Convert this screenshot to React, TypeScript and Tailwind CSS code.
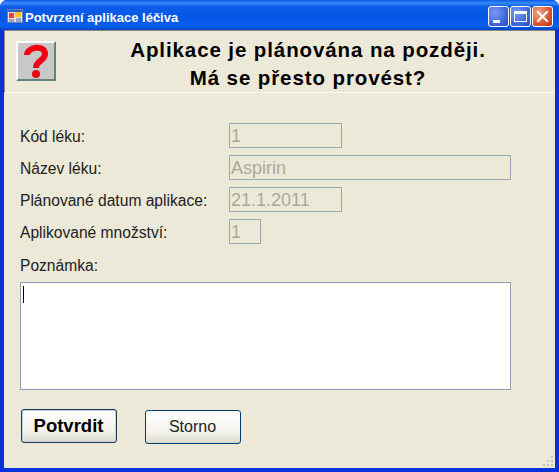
const font = { fontFamily: '"Liberation Sans", Arial, sans-serif' };

function Row({ label, value, inputW }: { label: string; value: string; inputW: string }) {
  return (
    <div className="flex h-[25px] items-center">
      <div className="w-[209px] shrink-0 pt-[2px] text-[15.6px] leading-none text-[#222]">{label}</div>
      <div className={`flex h-[25px] ${inputW} items-center border border-[#9aa7b5] bg-[#ece9d8] px-[1px] pt-[1px] text-[18px] text-[#aca899]`}>{value}</div>
    </div>
  );
}

function CaptionButton({ children, red = false }: { children: React.ReactNode; red?: boolean }) {
  return (
    <div
      className={`flex h-[21px] w-[21px] items-center justify-center rounded-[3px] border border-white ${
        red ? "bg-[radial-gradient(circle_at_30%_30%,#f0a58a,#d9562f_60%,#b8321a)]" : "bg-[radial-gradient(circle_at_30%_30%,#7c9cf0,#3f68dc_60%,#2a4cc4)]"
      }`}
    >
      {children}
    </div>
  );
}

export default function App() {
  return (
    <div style={font} className="flex h-[472px] w-[559px] flex-col overflow-hidden rounded-t-[7px] bg-[#0831d9]">
      <div className="flex h-[30px] shrink-0 items-center bg-[linear-gradient(180deg,#0a58e8_0%,#3a8cf8_10%,#0a5ce8_22%,#0355e6_60%,#0a60ee_88%,#0344c8_100%)] pl-[7px] pr-[6px] pt-[2px]">
        <svg width="16" height="16" viewBox="0 0 16 16" className="shrink-0">
          <rect x="0.5" y="1.5" width="15" height="13" fill="#e8e4d0" stroke="#6a7fb0" />
          <rect x="1" y="2" width="14" height="2" fill="#2a5fd8" />
          <rect x="2" y="5" width="5" height="5" fill="#e8402a" />
          <rect x="8" y="4" width="6" height="5" fill="#f4c020" />
          <rect x="2" y="11" width="5" height="3" fill="#90a8d0" />
          <rect x="9" y="10" width="5" height="4" fill="#90a8d0" />
        </svg>
        <div className="ml-[2px] flex-1 pt-[3px] text-[13px] font-bold text-white">Potvrzení aplikace léčiva</div>
        <div className="flex gap-[1px]">
          <CaptionButton>
            <div className="mt-[10px] mr-[5px] h-[3px] w-[7px] bg-white" />
          </CaptionButton>
          <CaptionButton>
            <div className="h-[11px] w-[13px] border border-t-[3px] border-white" />
          </CaptionButton>
          <CaptionButton red>
            <svg width="13" height="13" viewBox="0 0 13 13">
              <path d="M2 2 L11 11 M11 2 L2 11" stroke="#fff" strokeWidth="2" strokeLinecap="square" />
            </svg>
          </CaptionButton>
        </div>
      </div>

      <div className="ml-[4px] mr-[4px] mb-[4px] flex min-h-0 flex-1 flex-col bg-[#ece9d8]">
        <div className="flex h-[63px] shrink-0 border-b border-t border-l border-b-white border-t-[#8a887c] border-l-[#8a887c]">
          <div className="ml-[11px] mt-[10px] flex h-[40px] w-[40px] items-center justify-center border-2 border-t-white border-l-white border-r-[#5f8480] border-b-[#5f8480] bg-[#c8c8c8]">
            <svg width="28" height="36" viewBox="0 0 28 36">
              <path d="M5 12 C5 4 23 1 23 11 C23 18 14 17 14 25" fill="none" stroke="#f00010" strokeWidth="6" />
              <circle cx="14" cy="31" r="4" fill="#f00010" />
            </svg>
          </div>
          <div className="flex-1 pl-[5px] pt-[5px] text-center text-[20.5px] font-bold leading-[28px] tracking-[0.9px] text-black">
            <div>Aplikace je plánována na později.</div>
            <div>Má se přesto provést?</div>
          </div>
        </div>

        <div className="flex flex-col gap-[7px] pl-[16px] pt-[30px]">
          <Row label="Kód léku:" value="1" inputW="w-[113px]" />
          <Row label="Název léku:" value="Aspirin" inputW="w-[282px]" />
          <Row label="Plánované datum aplikace:" value="21.1.2011" inputW="w-[113px]" />
          <Row label="Aplikované množství:" value="1" inputW="w-[32px]" />
        </div>

        <div className="ml-[16px] mt-[13px] text-[15.6px] leading-[18px] text-[#222]">Poznámka:</div>
        <div className="ml-[16px] mt-[7px] h-[108px] w-[491px] border border-[#8f9db0] bg-white pl-[2px] pt-[3px]">
          <div className="h-[17px] w-px bg-black" />
        </div>

        <div className="ml-[17px] mt-[19px] flex items-start gap-[28px]">
          <div className="flex h-[34px] w-[96px] items-center justify-center rounded-[3px] border border-[#1c3a56] bg-[linear-gradient(180deg,#ffffff,#f2f1ea_70%,#dcd8ca)] pr-[1px] text-[18.5px] font-bold text-black shadow-[inset_0_0_0_1px_#c4d2e8]">
            Potvrdit
          </div>
          <div className="mt-px flex h-[34px] w-[96px] items-center justify-center rounded-[3px] border border-[#003c74] bg-[linear-gradient(180deg,#ffffff,#f2f1ea_70%,#dcd8ca)] pr-[1px] text-[16px] text-[#222]">
            Storno
          </div>
        </div>

        <div className="mt-auto flex justify-end pr-[1px] pb-[1px]">
          <svg width="11" height="11" viewBox="0 0 11 11">
            <g fill="#c4c1b0">
              <rect x="8" y="0" width="2" height="2" />
              <rect x="4" y="4" width="2" height="2" />
              <rect x="8" y="4" width="2" height="2" />
              <rect x="0" y="8" width="2" height="2" />
              <rect x="4" y="8" width="2" height="2" />
              <rect x="8" y="8" width="2" height="2" />
            </g>
          </svg>
        </div>
      </div>
    </div>
  );
}
